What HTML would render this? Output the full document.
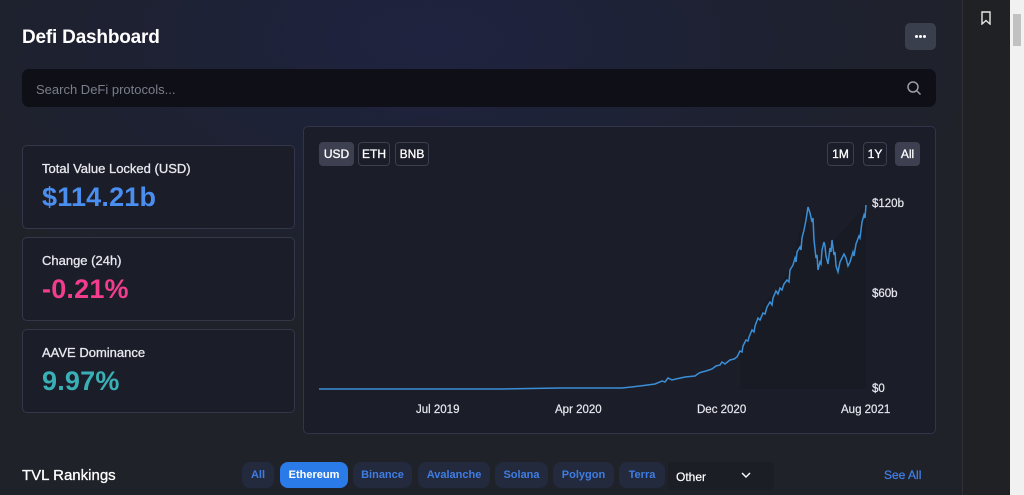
<!DOCTYPE html>
<html><head><style>
*{box-sizing:border-box;margin:0;padding:0}
body{width:1024px;height:495px;overflow:hidden;font-family:"Liberation Sans",sans-serif;background:#1f2129;position:relative;color:#fff}
#main{position:absolute;left:0;top:0;width:962px;height:495px;background:radial-gradient(ellipse 600px 300px at 430px 40px,#1f2340,#1e2130 60%,#202229 100%)}
#side{position:absolute;left:962px;top:0;width:48px;height:495px;background:#202124;border-left:1px solid #2e3036}
#sb{position:absolute;left:1010px;top:0;width:14px;height:495px;background:#f1f1f1}
#sb div{position:absolute;left:3px;top:14px;width:8px;height:32px;background:#c1c1c1}
h1{position:absolute;left:22px;top:27px;font-size:19px;font-weight:bold;letter-spacing:-0.2px}
.more{position:absolute;left:905px;top:23px;width:31px;height:27px;background:#3a3f4d;border-radius:5px}
.more i{position:absolute;top:12px;width:3px;height:3px;border-radius:2px;background:#fff}
.search{position:absolute;left:22px;top:69px;width:914px;height:38px;background:#0f1017;border-radius:7px;color:#7a7e8b;font-size:13px;padding:13px 14px}
.card{position:absolute;left:22px;width:273px;height:84px;border:1px solid #34374a;border-radius:5px;background:#1b1d29}
.card .l{position:absolute;left:19px;top:15px;font-size:13px;color:#e8e8ee;-webkit-text-stroke:0.3px #e8e8ee}
.card .v{position:absolute;left:19px;top:36px;font-size:27px;font-weight:bold;letter-spacing:0.2px}
.chart{position:absolute;left:303px;top:126px;width:633px;height:308px;border:1px solid #31344a;border-radius:5px;background:#1b1d29}
.b{position:absolute;top:142px;height:24px;border:1px solid #3c3f4d;border-radius:4px;font-size:12px;line-height:22px;text-align:center;color:#fff;-webkit-text-stroke:0.3px #fff}
.b.a{background:#3c4050;border-color:#3c4050}
.ax{position:absolute;font-size:11.5px;color:#e8e8ee;-webkit-text-stroke:0.2px #e8e8ee}
h2{position:absolute;left:22px;top:467px;font-size:15px;font-weight:normal;-webkit-text-stroke:0.3px #fff}
.t{position:absolute;top:462px;height:26px;border-radius:8px;background:#232a3e;color:#3f7de3;font-size:11px;line-height:26px;text-align:center;font-weight:bold}
.t.a{background:#2a7ae8;color:#fff}
</style></head><body>
<div id="main">
<h1>Defi Dashboard</h1>
<div class="more"><i style="left:10px"></i><i style="left:14px"></i><i style="left:18px"></i></div>
<div class="search">Search DeFi protocols...
<svg style="position:absolute;left:884px;top:11px" width="16" height="16" viewBox="0 0 16 16"><circle cx="7" cy="7" r="5" fill="none" stroke="#9a9ea9" stroke-width="1.5"/><path d="M11 11l3.5 3.5" stroke="#9a9ea9" stroke-width="1.5"/></svg></div>
<div class="card" style="top:145px"><div class="l">Total Value Locked (USD)</div><div class="v" style="color:#4a8ef0">$114.21b</div></div>
<div class="card" style="top:237px"><div class="l">Change (24h)</div><div class="v" style="color:#f23d8f">-0.21%</div></div>
<div class="card" style="top:329px"><div class="l">AAVE Dominance</div><div class="v" style="color:#39b0b6">9.97%</div></div>
<div class="chart"></div>
<div class="b a" style="left:319px;width:35px">USD</div>
<div class="b" style="left:358px;width:32px">ETH</div>
<div class="b" style="left:395px;width:34px">BNB</div>
<div class="b" style="left:827px;width:27px">1M</div>
<div class="b" style="left:863px;width:24px">1Y</div>
<div class="b a" style="left:895px;width:25px">All</div>
<svg style="position:absolute;left:0;top:0" width="962" height="495">
<path d="M740 389 L740 350 L760 310 L790 270 L805 210 L817 260 L866 205 L866 389Z" fill="#181a22" opacity="0.6"/>
<polyline fill="none" stroke="#3a8fd6" stroke-width="1.5" points="319,389 400,389 500,389 560,388 600,388 622,388 640,386 655,384 662,381 665,382 668,378 672,380 676,379 685,377 695,376 699,373 702,372 706,371 712,369 716,366 720,365 722,362 725,364 730,360 734,359 737,357 740,351 742,352 743,346 746,340 748,341 749,337 752,330 754,332 755,326 758,318 760,320 763,313 765,314 767,307 770,302 772,305 773,298 776,291 778,294 780,288 782,290 784,284 787,280 789,282 790,270 793,265 795,258 796,262 797,252 800,247 801,250 802,238 804,230 806,220 808,207 810,213 812,222 813,218 814,240 816,258 817,255 818,270 820,262 821,264 822,250 824,242 825,246 826,256 828,264 830,248 831,252 832,240 834,255 835,252 836,266 838,272 840,262 842,258 844,254 846,258 848,266 850,262 853,252 854,256 856,244 859,236 860,238 862,222 864,215 865,218 866,205"/>
</svg>
<div class="ax" style="left:872px;top:198px">$120b</div>
<div class="ax" style="left:872px;top:288px">$60b</div>
<div class="ax" style="left:872px;top:383px">$0</div>
<div class="ax" style="left:416px;top:404px">Jul 2019</div>
<div class="ax" style="left:555px;top:404px">Apr 2020</div>
<div class="ax" style="left:697px;top:404px">Dec 2020</div>
<div class="ax" style="left:841px;top:404px">Aug 2021</div>
<h2>TVL Rankings</h2>
<div class="t" style="left:242px;width:32px">All</div>
<div class="t a" style="left:280px;width:68px">Ethereum</div>
<div class="t" style="left:353px;width:59px">Binance</div>
<div class="t" style="left:418px;width:72px">Avalanche</div>
<div class="t" style="left:495px;width:53px">Solana</div>
<div class="t" style="left:553px;width:61px">Polygon</div>
<div class="t" style="left:619px;width:46px">Terra</div>
<div style="position:absolute;left:668px;top:462px;width:106px;height:28px;background:#1c1e26;border-radius:4px;font-size:12px;padding:8px 8px;-webkit-text-stroke:0.2px #fff">Other<svg style="position:absolute;left:73px;top:10px" width="10" height="7" viewBox="0 0 10 7"><path d="M1 1l4 4 4-4" fill="none" stroke="#fff" stroke-width="1.4"/></svg></div>
<div style="position:absolute;left:884px;top:468px;font-size:12px;color:#3f7de3;-webkit-text-stroke:0.3px #3f7de3">See All</div>
</div>
<div id="side"><svg style="position:absolute;left:17px;top:11px" width="12" height="14" viewBox="0 0 12 14"><path d="M2 1h8v12l-4-3.5L2 13z" fill="none" stroke="#e8e8e8" stroke-width="1.4"/></svg></div>
<div id="sb"><div></div></div>
</body></html>
